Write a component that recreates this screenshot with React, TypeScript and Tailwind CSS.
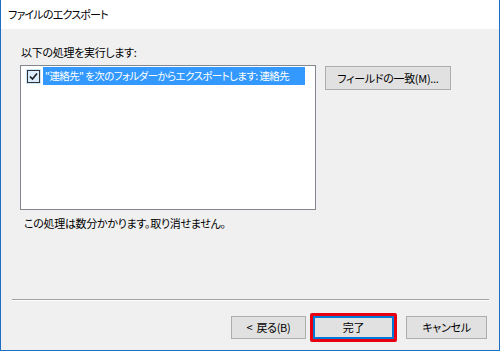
export default function App() {
  return (
    <div className="flex h-[351px] w-[500px] flex-col border-x border-b border-[#1c6fc4] font-['Noto_Sans_CJK_JP',sans-serif] text-[11px] tracking-[-0.3px] text-black [font-feature-settings:'palt']">
      {/* Title bar */}
      <div className="flex h-[29px] items-center bg-white pl-[7px] tracking-[-0.8px]">
        ファイルのエクスポート
      </div>

      {/* Body */}
      <div className="flex flex-1 flex-col bg-[#f0f0f0]">
        <p className="ml-[20px] mt-[15px] h-[16px] leading-[16px]">
          以下の処理を実行します:
        </p>

        <div className="ml-[19px] mt-[5px] flex items-start">
          {/* List box */}
          <div className="h-[145px] w-[296px] border border-[#828790] bg-white pt-[1px]">
            <div className="flex h-[18px] items-center">
              <span className="ml-[5px] flex h-[15px] w-[15px] items-center justify-center bg-[#cce8ff]">
                <span className="flex h-[13px] w-[13px] items-center justify-center border border-[#333] bg-[#dcecfc]">
                  <svg width="9" height="9" viewBox="0 0 9 9">
                    <path
                      d="M1 4.5 L3.5 7 L8 1.5"
                      fill="none"
                      stroke="#1a1a1a"
                      strokeWidth="1.6"
                    />
                  </svg>
                </span>
              </span>
              <span className="ml-[2px] flex h-[18px] w-[262px] items-center overflow-hidden whitespace-nowrap bg-[#3399ff] pl-[2px] text-[10.5px] leading-[18px] tracking-[-0.6px] text-white">
                "連絡先" を次のフォルダーからエクスポートします: 連絡先
              </span>
            </div>
          </div>

          <button className="ml-[9px] mt-[1px] h-[24px] w-[126px] border border-[#adadad] bg-[#e1e1e1] leading-[22px]">
            フィールドの一致(M)...
          </button>
        </div>

        <p className="ml-[23px] mt-[5px] h-[16px] leading-[16px]">
          この処理は数分かかります。取り消せません。
        </p>

        <div className="flex-1" />

        {/* Separator */}
        <div className="ml-[11px] mr-[10px] h-[2px] border-t border-b border-t-[#a0a0a0] border-b-white" />

        {/* Buttons */}
        <div className="mt-[12px] mb-[8px] flex h-[29px] items-center justify-end pr-[12px]">
          <button className="h-[23px] w-[75px] border border-[#adadad] bg-[#e1e1e1] leading-[21px]">
            &lt;<span className="ml-[4px]">戻る(B)</span>
          </button>
          <div className="ml-[4px] rounded-[2px] border-[3px] border-[#e60012]">
            <button className="block h-[23px] w-[81px] border-2 border-[#0078d7] bg-[#e1e1e1] leading-[19px]">
              完了
            </button>
          </div>
          <button className="ml-[9px] h-[23px] w-[81px] border border-[#adadad] bg-[#e1e1e1] leading-[21px]">
            キャンセル
          </button>
        </div>
      </div>
    </div>
  );
}
